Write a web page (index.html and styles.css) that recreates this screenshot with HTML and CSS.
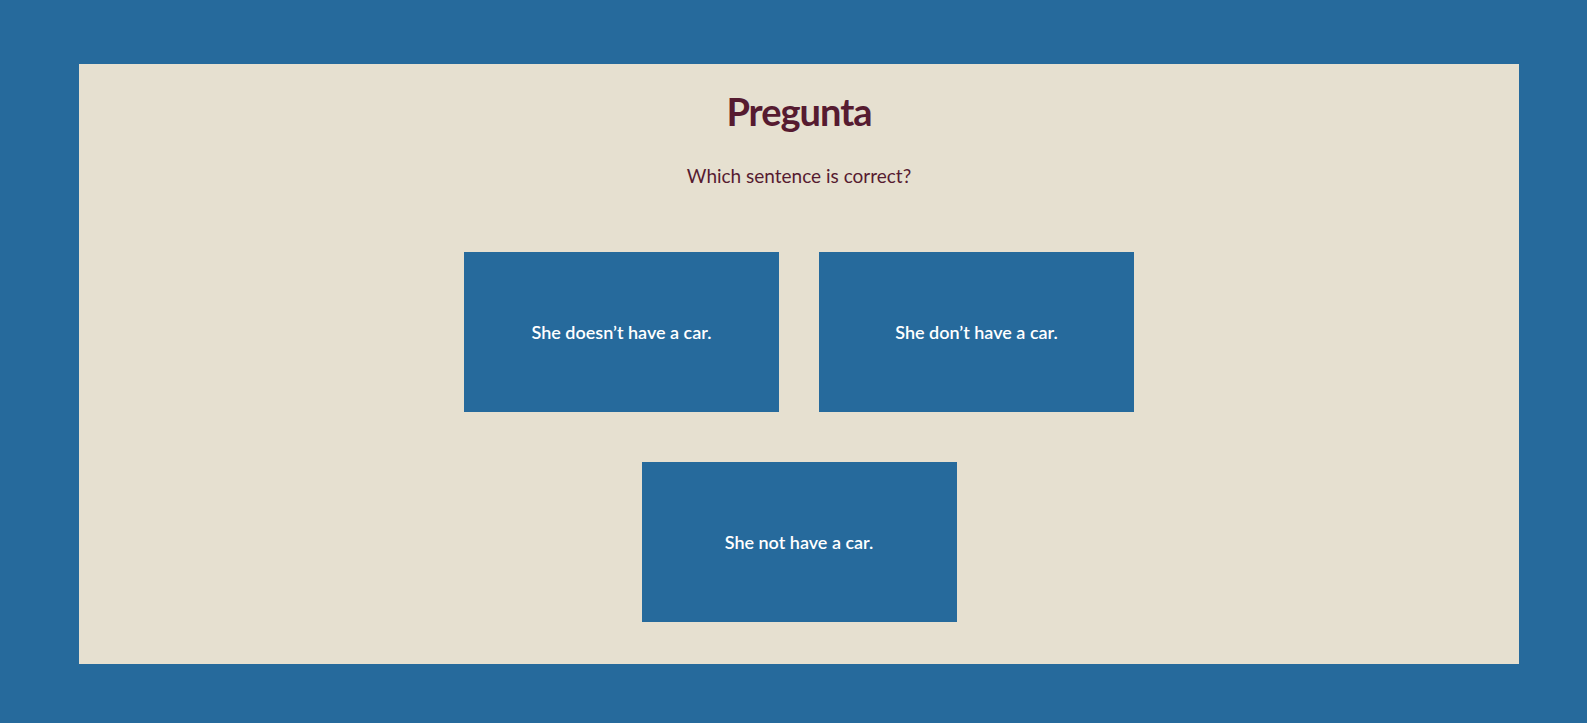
FILE: index.html
```html
<!DOCTYPE html>
<html lang="es">
<head>
<meta charset="utf-8">
<title>Pregunta</title>
<link rel="stylesheet" href="styles.css">
</head>
<body>
<main class="panel">
  <h1 class="title">Pregunta</h1>
  <p class="question">Which sentence is correct?</p>
  <div class="options">
    <button class="option" type="button">She doesn’t have a car.</button>
    <button class="option" type="button">She don’t have a car.</button>
    <button class="option" type="button">She not have a car.</button>
  </div>
</main>
</body>
</html>
```
FILE: styles.css
```css
html, body {
  margin: 0;
  padding: 0;
}
body {
  background: #266a9c;
  font-family: Lato, "Open Sans", "DejaVu Sans", sans-serif;
  padding: 64px 68px 59px 79px;
  box-sizing: border-box;
  height: 723px;
}
.panel {
  background: #e6e0d0;
  height: 600px;
  box-sizing: border-box;
  padding-top: 23px;
  text-align: center;
}
.title {
  margin: 0;
  font-size: 38px;
  line-height: 48px;
  font-weight: 700;
  color: #561b30;
  letter-spacing: -1px;
}
.question {
  margin: 29px 0 0;
  font-size: 19px;
  line-height: 24px;
  color: #561b30;
}
.options {
  width: 670px;
  margin: 64px auto 0;
  display: flex;
  flex-wrap: wrap;
  justify-content: center;
  gap: 50px 40px;
}
.option {
  width: 315px;
  height: 160px;
  border: 0;
  margin: 0;
  padding: 0;
  background: #266a9c;
  color: #ffffff;
  font-family: inherit;
  font-size: 18px;
  font-weight: 600;
}
```
